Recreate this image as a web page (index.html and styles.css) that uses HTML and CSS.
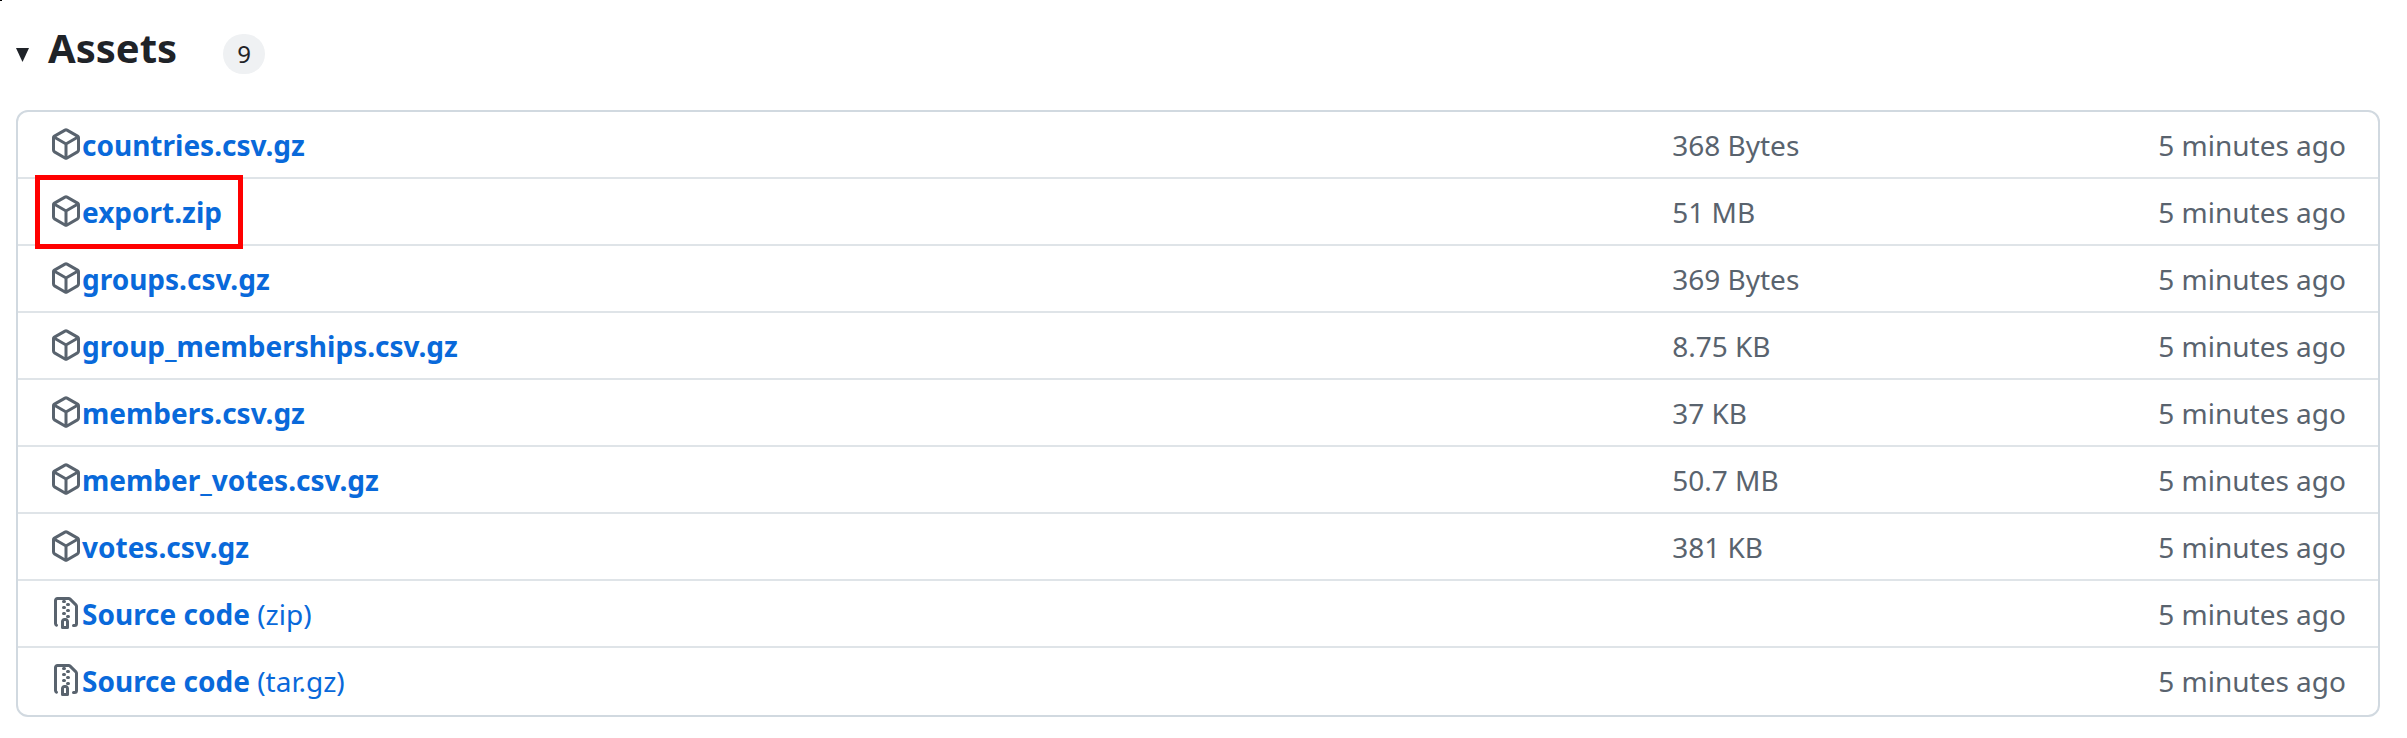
FILE: index.html
```
<!DOCTYPE html>
<html lang="en">
<head>
<meta charset="utf-8">
<title>Release assets</title>
<link rel="stylesheet" href="styles.css">
</head>
<body>
<svg class="sprite" aria-hidden="true">
  <symbol id="package" viewBox="0 0 16 16"><path d="m8.878.392 5.25 3.045c.54.314.872.89.872 1.514v6.098a1.75 1.75 0 0 1-.872 1.514l-5.25 3.045a1.75 1.75 0 0 1-1.756 0l-5.25-3.045A1.75 1.75 0 0 1 1 11.049V4.951c0-.624.332-1.201.872-1.514L7.122.392a1.75 1.75 0 0 1 1.756 0ZM7.875 1.69l-4.63 2.685L8 7.133l4.755-2.758-4.63-2.685a.248.248 0 0 0-.25 0ZM2.5 5.677v5.372c0 .09.047.171.125.216l4.625 2.683V8.432Zm6.25 8.271 4.625-2.683a.25.25 0 0 0 .125-.216V5.677L8.75 8.432Z"/></symbol>
  <symbol id="file-zip" viewBox="0 0 16 16"><path d="M3.5 1.75v11.5c0 .09.048.173.126.217a.75.75 0 0 1-.752 1.298A1.748 1.748 0 0 1 2 13.25V1.75C2 .784 2.784 0 3.75 0h5.586c.464 0 .909.185 1.237.513l2.914 2.914c.329.328.513.773.513 1.237v8.586A1.75 1.75 0 0 1 12.25 15h-.5a.75.75 0 0 1 0-1.5h.5a.25.25 0 0 0 .25-.25V4.664a.25.25 0 0 0-.073-.177L9.513 1.573a.25.25 0 0 0-.177-.073H7.25a.75.75 0 0 1 0 1.5h-.5a.75.75 0 0 1 0-1.5h-3a.25.25 0 0 0-.25.25Zm3.75 8.75h.5c.966 0 1.75.784 1.75 1.75v3a.75.75 0 0 1-.75.75h-2.5a.75.75 0 0 1-.75-.75v-3c0-.966.784-1.75 1.75-1.75ZM6 5.25a.75.75 0 0 1 .75-.75h.5a.75.75 0 0 1 0 1.5h-.5A.75.75 0 0 1 6 5.25Zm.75 2.25h.5a.75.75 0 0 1 0 1.5h-.5a.75.75 0 0 1 0-1.5ZM8 6.75A.75.75 0 0 1 8.75 6h.5a.75.75 0 0 1 0 1.5h-.5A.75.75 0 0 1 8 6.75ZM8.75 3h.5a.75.75 0 0 1 0 1.5h-.5a.75.75 0 0 1 0-1.5ZM8 9.75A.75.75 0 0 1 8.75 9h.5a.75.75 0 0 1 0 1.5h-.5A.75.75 0 0 1 8 9.75Zm-1 2.5v2.25h1v-2.25a.25.25 0 0 0-.25-.25h-.5a.25.25 0 0 0-.25.25Z"/></symbol>
</svg>
<details class="assets" open>
  <summary class="assets-summary">
    <svg class="marker" viewBox="0 0 13 14" aria-hidden="true"><path d="M0 0h13L6.500 14z"/></svg>
    <h3 class="assets-title">Assets</h3>
    <span class="counter">9</span>
  </summary>
  <ul class="asset-list">
    <li class="asset">
      <div class="asset-name"><svg class="icon" aria-hidden="true"><use href="#package"/></svg><a class="asset-link" href="#"><b>countries.csv.gz</b></a></div>
      <span class="asset-size">368 Bytes</span><span class="asset-time">5 minutes ago</span>
    </li>
    <li class="asset">
      <div class="asset-name highlighted"><svg class="icon" aria-hidden="true"><use href="#package"/></svg><a class="asset-link" href="#"><b>export.zip</b></a></div>
      <span class="asset-size">51 MB</span><span class="asset-time">5 minutes ago</span>
    </li>
    <li class="asset">
      <div class="asset-name"><svg class="icon" aria-hidden="true"><use href="#package"/></svg><a class="asset-link" href="#"><b>groups.csv.gz</b></a></div>
      <span class="asset-size">369 Bytes</span><span class="asset-time">5 minutes ago</span>
    </li>
    <li class="asset">
      <div class="asset-name"><svg class="icon" aria-hidden="true"><use href="#package"/></svg><a class="asset-link" href="#"><b>group_memberships.csv.gz</b></a></div>
      <span class="asset-size">8.75 KB</span><span class="asset-time">5 minutes ago</span>
    </li>
    <li class="asset">
      <div class="asset-name"><svg class="icon" aria-hidden="true"><use href="#package"/></svg><a class="asset-link" href="#"><b>members.csv.gz</b></a></div>
      <span class="asset-size">37 KB</span><span class="asset-time">5 minutes ago</span>
    </li>
    <li class="asset">
      <div class="asset-name"><svg class="icon" aria-hidden="true"><use href="#package"/></svg><a class="asset-link" href="#"><b>member_votes.csv.gz</b></a></div>
      <span class="asset-size">50.7 MB</span><span class="asset-time">5 minutes ago</span>
    </li>
    <li class="asset">
      <div class="asset-name"><svg class="icon" aria-hidden="true"><use href="#package"/></svg><a class="asset-link" href="#"><b>votes.csv.gz</b></a></div>
      <span class="asset-size">381 KB</span><span class="asset-time">5 minutes ago</span>
    </li>
    <li class="asset">
      <div class="asset-name"><svg class="icon" aria-hidden="true"><use href="#file-zip"/></svg><a class="asset-link" href="#"><b>Source code</b> (zip)</a></div>
      <span class="asset-size"></span><span class="asset-time">5 minutes ago</span>
    </li>
    <li class="asset">
      <div class="asset-name"><svg class="icon" aria-hidden="true"><use href="#file-zip"/></svg><a class="asset-link" href="#"><b>Source code</b> (tar.gz)</a></div>
      <span class="asset-size"></span><span class="asset-time">5 minutes ago</span>
    </li>
  </ul>
</details>
</body>
</html>
```
FILE: styles.css
```
* {
  box-sizing: border-box;
}

body {
  margin: 0;
  background: #fff;
  color: #1f2328;
  font: 28px/42px "Noto Sans", sans-serif;
}

/* Dark speck in the page corner */
body::before {
  content: "";
  position: absolute;
  top: 0;
  left: 0;
  width: 2px;
  height: 1px;
  background: #000;
}

.sprite {
  position: absolute;
  width: 0;
  height: 0;
}

.assets {
  padding: 20px 27px 21px 16px;
}

.assets-summary {
  display: flex;
  align-items: flex-start;
  height: 60px;
  margin-bottom: 30px;
  list-style: none;
  cursor: pointer;
}

.marker {
  width: 13px;
  height: 14px;
  margin: 28px 19px 0 0;
  fill: #1f2328;
}

.assets-title {
  margin: 0 46px 0 0;
  font-size: 40px;
  font-weight: 700;
  line-height: 56px;
}

.counter {
  min-width: 42px;
  margin-top: 14px;
  padding: 0 12px;
  border-radius: 20px;
  background: #eff1f3;
  font-size: 24px;
  line-height: 40px;
  text-align: center;
}

.asset-list {
  margin: 0;
  padding: 0 0 2px;
  border: 2px solid #d1d9e0;
  border-radius: 12px;
  list-style: none;
}

.asset {
  display: grid;
  grid-template-columns: 65fr 16fr 11fr;
  padding: 12px 32px 11px;
}

.asset + .asset {
  border-top: 2px solid #dfe4e8;
}

.asset-name {
  display: flex;
  align-items: flex-start;
  justify-self: start;
  position: relative;
}

.icon {
  flex: none;
  width: 32px;
  height: 32px;
  margin-top: 4px;
  fill: #59636e;
}

.asset-link {
  color: #0969da;
  text-decoration: none;
  white-space: pre;
}

.asset-link b {
  font-weight: 700;
}

/* Outline drawn over the row dividers */
.highlighted::after {
  content: "";
  position: absolute;
  inset: -16px -21px -16px -15px;
  border: 5px solid #f00;
  pointer-events: none;
}

.asset-size,
.asset-time {
  color: #59636e;
  white-space: nowrap;
}

.asset-time {
  text-align: right;
}
```
